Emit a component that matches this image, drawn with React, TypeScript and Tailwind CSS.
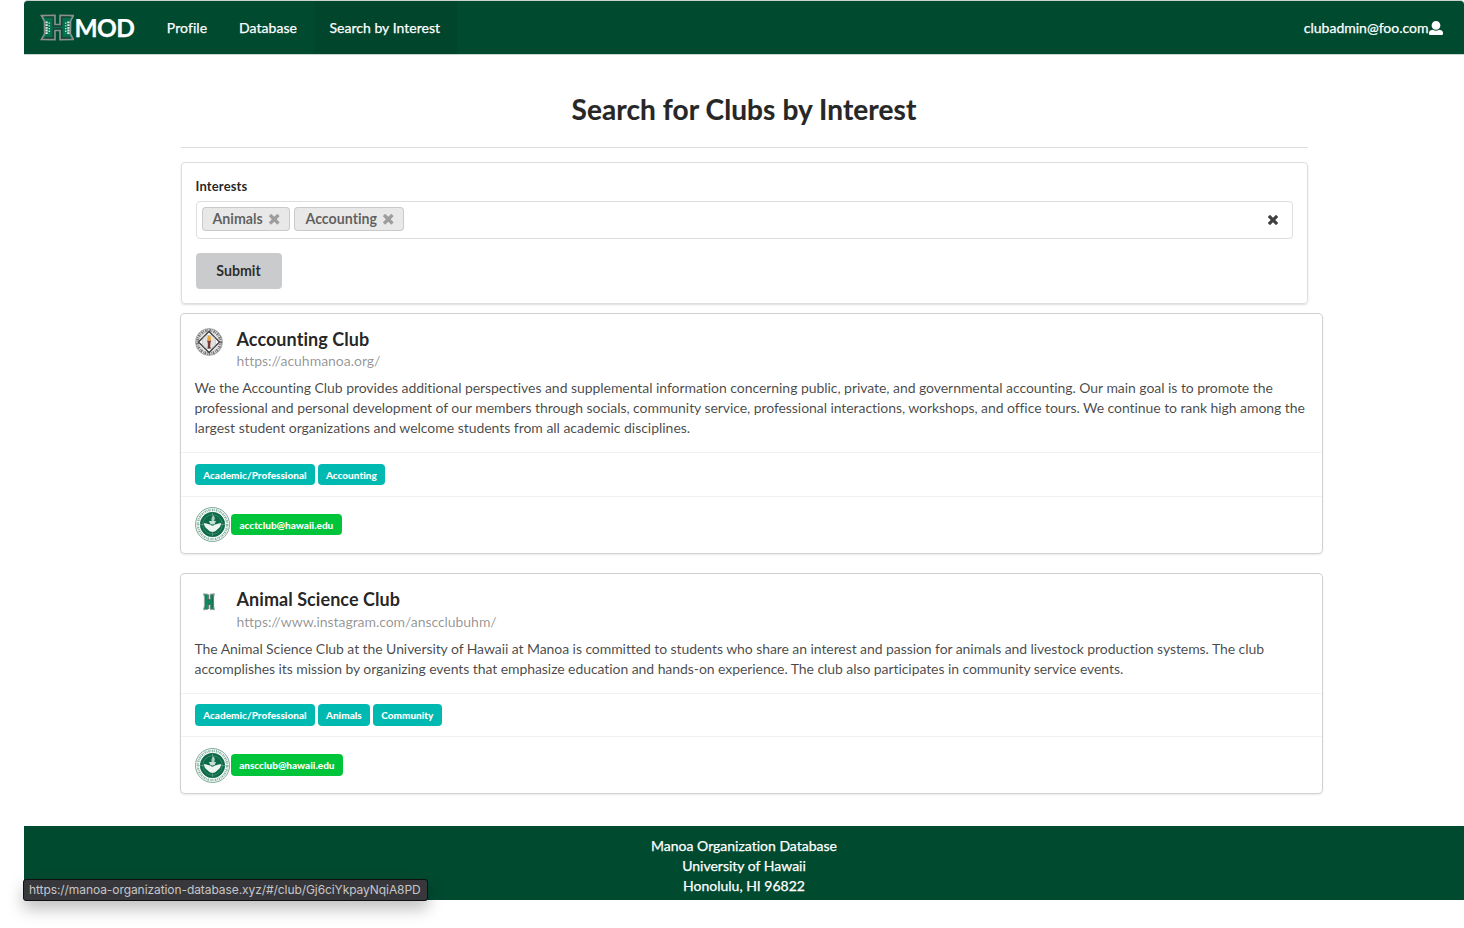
import React from 'react';

function TimesIcon({ className }: { className: string }) {
  return (
    <svg className={className} viewBox="0 64 384 384" fill="currentColor">
      <path d="M323.1 441l53.9-53.9c9.4-9.4 9.4-24.5 0-33.9L279.8 256l97.2-97.2c9.4-9.4 9.4-24.5 0-33.9L323.1 71c-9.4-9.4-24.5-9.4-33.9 0L192 168.2 94.8 71c-9.4-9.4-24.5-9.4-33.9 0L7 124.9c-9.4 9.4-9.4 24.5 0 33.9l97.2 97.2L7 353.2c-9.4 9.4-9.4 24.5 0 33.9L60.9 441c9.4 9.4 24.5 9.4 33.9 0l97.2-97.2 97.2 97.2c9.3 9.3 24.5 9.3 33.9 0z" />
    </svg>
  );
}

function UserIcon({ className }: { className: string }) {
  return (
    <svg className={className} viewBox="0 0 512 512" fill="currentColor">
      <path d="M256 0c88.366 0 160 71.634 160 160s-71.634 160-160 160S96 248.366 96 160 167.634 0 256 0zm183.283 333.821l-71.313-17.828c-74.923 53.89-165.738 41.864-223.94 0l-71.313 17.828C29.981 344.505 0 382.903 0 426.955V464c0 26.51 21.49 48 48 48h416c26.51 0 48-21.49 48-48v-37.045c0-44.052-29.981-82.45-72.717-93.134z" />
    </svg>
  );
}

function HLogo() {
  const block =
    'M1.4 1.6 L15 1.2 V10.5 H20 V1.2 L33.4 1.6 L30.6 7 L30.4 20 L33.4 25.4 L20 25.8 V16.5 H15 V25.8 L1.4 25.4 L4.6 20 L4.4 7 Z';
  return (
    <svg className="h-[27px] w-[34px] shrink-0" viewBox="0 0 34 27" fill="none">
      <path d={block} fill="#00704d" stroke="#8b8f8e" strokeWidth="1.6" />
      <path d="M4.6 3.2 H13.2 V12.2 H21.8 V3.2 H30.4" stroke="#2b3431" strokeWidth="1.2" />
      <path d="M4.6 23.8 H13.2 V14.9 H21.8 V23.8 H30.4" stroke="#2b3431" strokeWidth="1.2" />
      <path d="M6.6 7.5 V20 M28.4 7.5 V20" stroke="#e4eee9" strokeWidth="2.2" strokeDasharray="1.8 0.9" />
      <path d="M9.3 8.5 V19.5 M25.7 8.5 V19.5" stroke="#cfe0d9" strokeWidth="1.5" strokeDasharray="1.3 1.4" />
    </svg>
  );
}

function AccountingLogo() {
  return (
    <svg className="size-7 shrink-0" viewBox="0 0 28 28" fill="none">
      <circle cx="14" cy="14" r="13.5" fill="#e6e6e6" stroke="#9a9a9a" strokeWidth="0.8" />
      <circle cx="14" cy="14" r="11.6" stroke="#777" strokeWidth="3" strokeDasharray="1.6 0.7 0.8 1.1" />
      <path d="M14 3.5 L24.5 14 L14 24.5 L3.5 14 Z" fill="#fff" stroke="#3c3c3c" strokeWidth="1.3" />
      <circle cx="14" cy="14" r="6.8" fill="#e3e1e2" stroke="#b4b4b8" strokeWidth="0.6" />
      <path d="M12 12.5 H16.2 L15.4 15 L15.2 20 H12.8 L12.8 15 Z" fill="#7c3a34" />
      <path d="M14 7 C16.5 9 16.3 11 15.3 12.6 H12.8 C11.7 11 12 9 14 7 Z" fill="#f0a533" />
      <path d="M12.5 20 H15.7" stroke="#5b3434" />
    </svg>
  );
}

function AnimalLogo() {
  return (
    <svg className="size-7 shrink-0" viewBox="0 0 28 28">
      <path
        d="M8.5 5.8 L13 6.2 L13 11.5 H15 L15 6.2 L19.5 5.8 L18.6 9 V18 L19.5 21.8 L15 21.4 V16.5 H13 V21.4 L8.5 21.8 L9.4 18 V9 Z"
        fill="#0a8a5f"
        stroke="#a3a3a3"
        strokeWidth="0.9"
      />
      <path d="M13.2 6.5 V11.8 H15 M13.2 21 V16.4 H15 M18 8 V19" stroke="#3d4a45" strokeWidth="0.9" fill="none" />
    </svg>
  );
}

function Seal({ className = '' }: { className?: string }) {
  return (
    <svg className={`size-[35px] shrink-0 ${className}`} viewBox="0 0 35 35" fill="none">
      <circle cx="17.5" cy="17.5" r="17" fill="#fff" stroke="#6fa08c" strokeWidth="0.9" />
      <circle cx="17.5" cy="17.5" r="14.7" stroke="#8ab4a3" strokeWidth="2.4" strokeDasharray="1.4 0.7 0.8 0.9" />
      <circle cx="17.5" cy="17.5" r="12.2" fill="#0b6a48" stroke="#0b6a48" strokeWidth="0.8" />
      <circle cx="17.5" cy="17.5" r="9.8" stroke="#5d9a83" strokeWidth="0.6" />
      <path d="M1.5 17.5 H33.5 M17.5 6 V29" stroke="#8bb7a6" strokeWidth="0.5" />
      <path d="M9 16 C12.5 16.6 15.5 17.6 17.5 19 C19.5 17.6 22.5 16.6 26 16 C26 19 24.5 21 22.8 22 C21 24.2 19.5 24.8 17.5 24.8 C15.5 24.8 14 24.2 12.2 22 C10.5 21 9 19 9 16 Z" fill="#edf5f1" />
      <path d="M18.5 8.5 C20.5 10.5 20 13 18.6 14.6 H17 C15.8 12.5 16.4 10 18.5 8.5 Z" fill="#a8cdbe" />
      <path d="M13.8 14 H21 L19.6 17 H15.4 Z" fill="#c8dfd6" />
    </svg>
  );
}

function Chip({ text, className }: { text: string; className: string }) {
  return (
    <span
      className={`flex h-6 items-center justify-between rounded-[4px] bg-[#e8e8e8] pr-[10.5px] text-[14.2px] leading-none font-bold text-black/60 shadow-[inset_0_0_0_1px_rgba(34,36,38,0.15)] ${className}`}
    >
      {text}
      <TimesIcon className="size-[10.5px] text-black/32" />
    </span>
  );
}

interface Tag {
  text: string;
  width: string;
}

interface Club {
  name: string;
  url: string;
  urlTracking: string;
  lines: { text: string; tracking: string }[];
  tags: Tag[];
  email: Tag;
  logo: React.ReactNode;
  height: string;
  urlMargin: string;
  bodyHeight: string;
  tagRow: string;
  labelBox: string;
  sealShift: string;
}

const clubs: Club[] = [
  {
    name: 'Accounting Club',
    url: 'https://acuhmanoa.org/',
    urlTracking: 'tracking-[-0.02px]',
    lines: [
      {
        text: 'We the Accounting Club provides additional perspectives and supplemental information concerning public, private, and governmental accounting. Our main goal is to promote the',
        tracking: 'tracking-[-0.052px]',
      },
      {
        text: 'professional and personal development of our members through socials, community service, professional interactions, workshops, and office tours. We continue to rank high among the',
        tracking: 'tracking-[-0.066px]',
      },
      {
        text: 'largest student organizations and welcome students from all academic disciplines.',
        tracking: 'tracking-[-0.035px]',
      },
    ],
    tags: [
      { text: 'Academic/Professional', width: 'w-[120px]' },
      { text: 'Accounting', width: 'w-[67px]' },
    ],
    email: { text: 'acctclub@hawaii.edu', width: 'w-[111px]' },
    logo: <AccountingLogo />,
    height: 'h-[239px]',
    urlMargin: 'mt-[-1px] mb-px',
    bodyHeight: 'h-[138px]',
    tagRow: 'h-[44px] pt-[11px]',
    labelBox: 'h-[21px] pt-px',
    sealShift: '',
  },
  {
    name: 'Animal Science Club',
    url: 'https://www.instagram.com/anscclubuhm/',
    urlTracking: 'tracking-[-0.055px]',
    lines: [
      {
        text: 'The Animal Science Club at the University of Hawaii at Manoa is committed to students who share an interest and passion for animals and livestock production systems. The club',
        tracking: 'tracking-[-0.075px]',
      },
      {
        text: 'accomplishes its mission by organizing events that emphasize education and hands-on experience. The club also participates in community service events.',
        tracking: 'tracking-[-0.07px]',
      },
    ],
    tags: [
      { text: 'Academic/Professional', width: 'w-[120px]' },
      { text: 'Animals', width: 'w-[52px]' },
      { text: 'Community', width: 'w-[69px]' },
    ],
    email: { text: 'anscclub@hawaii.edu', width: 'w-[112px]' },
    logo: <AnimalLogo />,
    height: 'h-[219px]',
    urlMargin: 'mb-px',
    bodyHeight: 'h-[119px]',
    tagRow: 'h-[43px] pt-[10px]',
    labelBox: 'h-[22px] pb-px',
    sealShift: 'mt-px',
  },
];

const label =
  'flex items-center justify-center rounded-[4px] pr-[0.3px] text-[10px] leading-none font-black text-white whitespace-nowrap';

function ClubCard({ club }: { club: Club }) {
  return (
    <article
      className={`w-[1141px] rounded-[4px] bg-white shadow-[0_1px_3px_0_#d4d4d5,0_0_0_1px_#d0d0d1] ${club.height}`}
    >
      <div className={`pt-[14px] pr-[14px] pl-[13.5px] ${club.bodyHeight}`}>
        <div className="flex">
          {club.logo}
          <div className="ml-[14px]">
            <h2 className="h-[24px] text-[18px] leading-[23px] font-bold tracking-[0.06px] text-black/87">{club.name}</h2>
            <p className={`text-[14px] leading-[20px] text-black/43 ${club.urlTracking} ${club.urlMargin}`}>{club.url}</p>
          </div>
        </div>
        <div className="mt-[6px] text-[14px] leading-[20px] whitespace-nowrap text-black/73">
          {club.lines.map((line) => (
            <p key={line.text} className={line.tracking}>
              {line.text}
            </p>
          ))}
        </div>
      </div>
      <div className={`flex items-start gap-[3px] border-t border-black/5 px-[14px] ${club.tagRow}`}>
        {club.tags.map((tag) => (
          <span key={tag.text} className={`bg-[#00b9b0] ${label} ${club.labelBox} ${tag.width}`}>
            {tag.text}
          </span>
        ))}
      </div>
      <div className="flex items-center gap-px border-t border-black/5 px-[14px] pt-[10px]">
        <Seal className={club.sealShift} />
        <span className={`bg-[#00c439] ${label} ${club.labelBox} ${club.email.width}`}>{club.email.text}</span>
      </div>
    </article>
  );
}

export default function App() {
  return (
    <div className="relative h-[928px] w-[1464px] overflow-hidden bg-white pl-6 font-[Lato,sans-serif] [font-variant-ligatures:none]">
      <nav className="flex h-[55px] items-stretch rounded-t-[4px] border-y border-[#c9d3cf] bg-[#004a30] text-[14px] text-white [-webkit-text-stroke:0.25px_white]">
        <div className="flex items-center pl-4">
          <HLogo />
          <span className="mt-[1px] ml-[0.5px] w-[59.5px] text-[24.5px] leading-none font-bold tracking-[-0.6px]">MOD</span>
        </div>
        <a className="ml-[16px] flex w-[73px] items-center justify-center pl-px tracking-[0.08px] [font-variant-ligatures:normal]">
          Profile
        </a>
        <a className="flex w-[91px] items-center justify-center pr-[1px] tracking-[0.05px]">Database</a>
        <a className="flex w-[143px] items-center justify-center bg-[#00452c] pr-[1.5px] tracking-[0.03px]">
          Search by Interest
        </a>
        <div className="ml-auto flex items-center gap-[0.5px] pr-[21px]">
          clubadmin@foo.com
          <UserIcon className="size-[14px]" />
        </div>
      </nav>

      <main className="h-[771px] pl-[157px]">
        <div className="w-[1127px]">
          <h1 className="h-[92px] pt-[36px] pr-px text-center text-[28px] leading-9 font-bold tracking-[0.09px] text-black/87 [-webkit-text-stroke:0.2px_#222]">
            Search for Clubs by Interest
          </h1>
          <hr className="border-[#dededf]" />
          <section className="mt-[14px] h-[142px] rounded-[4px] border border-[#dededf] px-[14px] pt-[13px] shadow-[0_1px_2px_0_rgba(34,36,38,0.15)]">
            <div className="-ml-[0.5px] h-[25px] text-[13px] leading-[20px] font-bold tracking-[0.15px] text-black/87">
              Interests
            </div>
            <div className="flex h-[38px] items-center gap-1 rounded-[4px] border border-[#dededf] pr-[14px] pb-[1.5px] pl-[5px]">
              <Chip text="Animals" className="w-[88px] pl-[10.5px]" />
              <Chip text="Accounting" className="w-[110px] pl-[11.5px]" />
              <TimesIcon className="mt-[0.5px] ml-auto size-[10px] text-black/75" />
            </div>
            <button className="mt-[14px] h-[36px] w-[86px] rounded-[4px] bg-[#cacbcd] pr-[1px] text-[14.2px] font-bold text-black/80">
              Submit
            </button>
          </section>
        </div>
        <div className="mt-[10px] flex flex-col gap-[21px]">
          {clubs.map((club) => (
            <ClubCard key={club.name} club={club} />
          ))}
        </div>
      </main>

      <footer className="h-[74px] bg-[#004a30] pt-[10px] text-center text-[14px] leading-[20px] text-white [-webkit-text-stroke:0.25px_white]">
        <p>Manoa Organization Database</p>
        <p>University of Hawaii</p>
        <p>Honolulu, HI 96822</p>
      </footer>

      <div className="absolute top-[879px] left-[23px] flex h-[22px] w-[405px] items-center rounded-[3px] border border-[#111] bg-[#38373c] pl-[5px] font-[Inter,sans-serif] text-[12px] tracking-[-0.075px] whitespace-nowrap text-[#c6c6c8] shadow-[0_8px_16px_rgba(0,0,0,0.25)]">
        https://manoa-organization-database.xyz/#/club/Gj6ciYkpayNqiA8PD
      </div>
    </div>
  );
}
